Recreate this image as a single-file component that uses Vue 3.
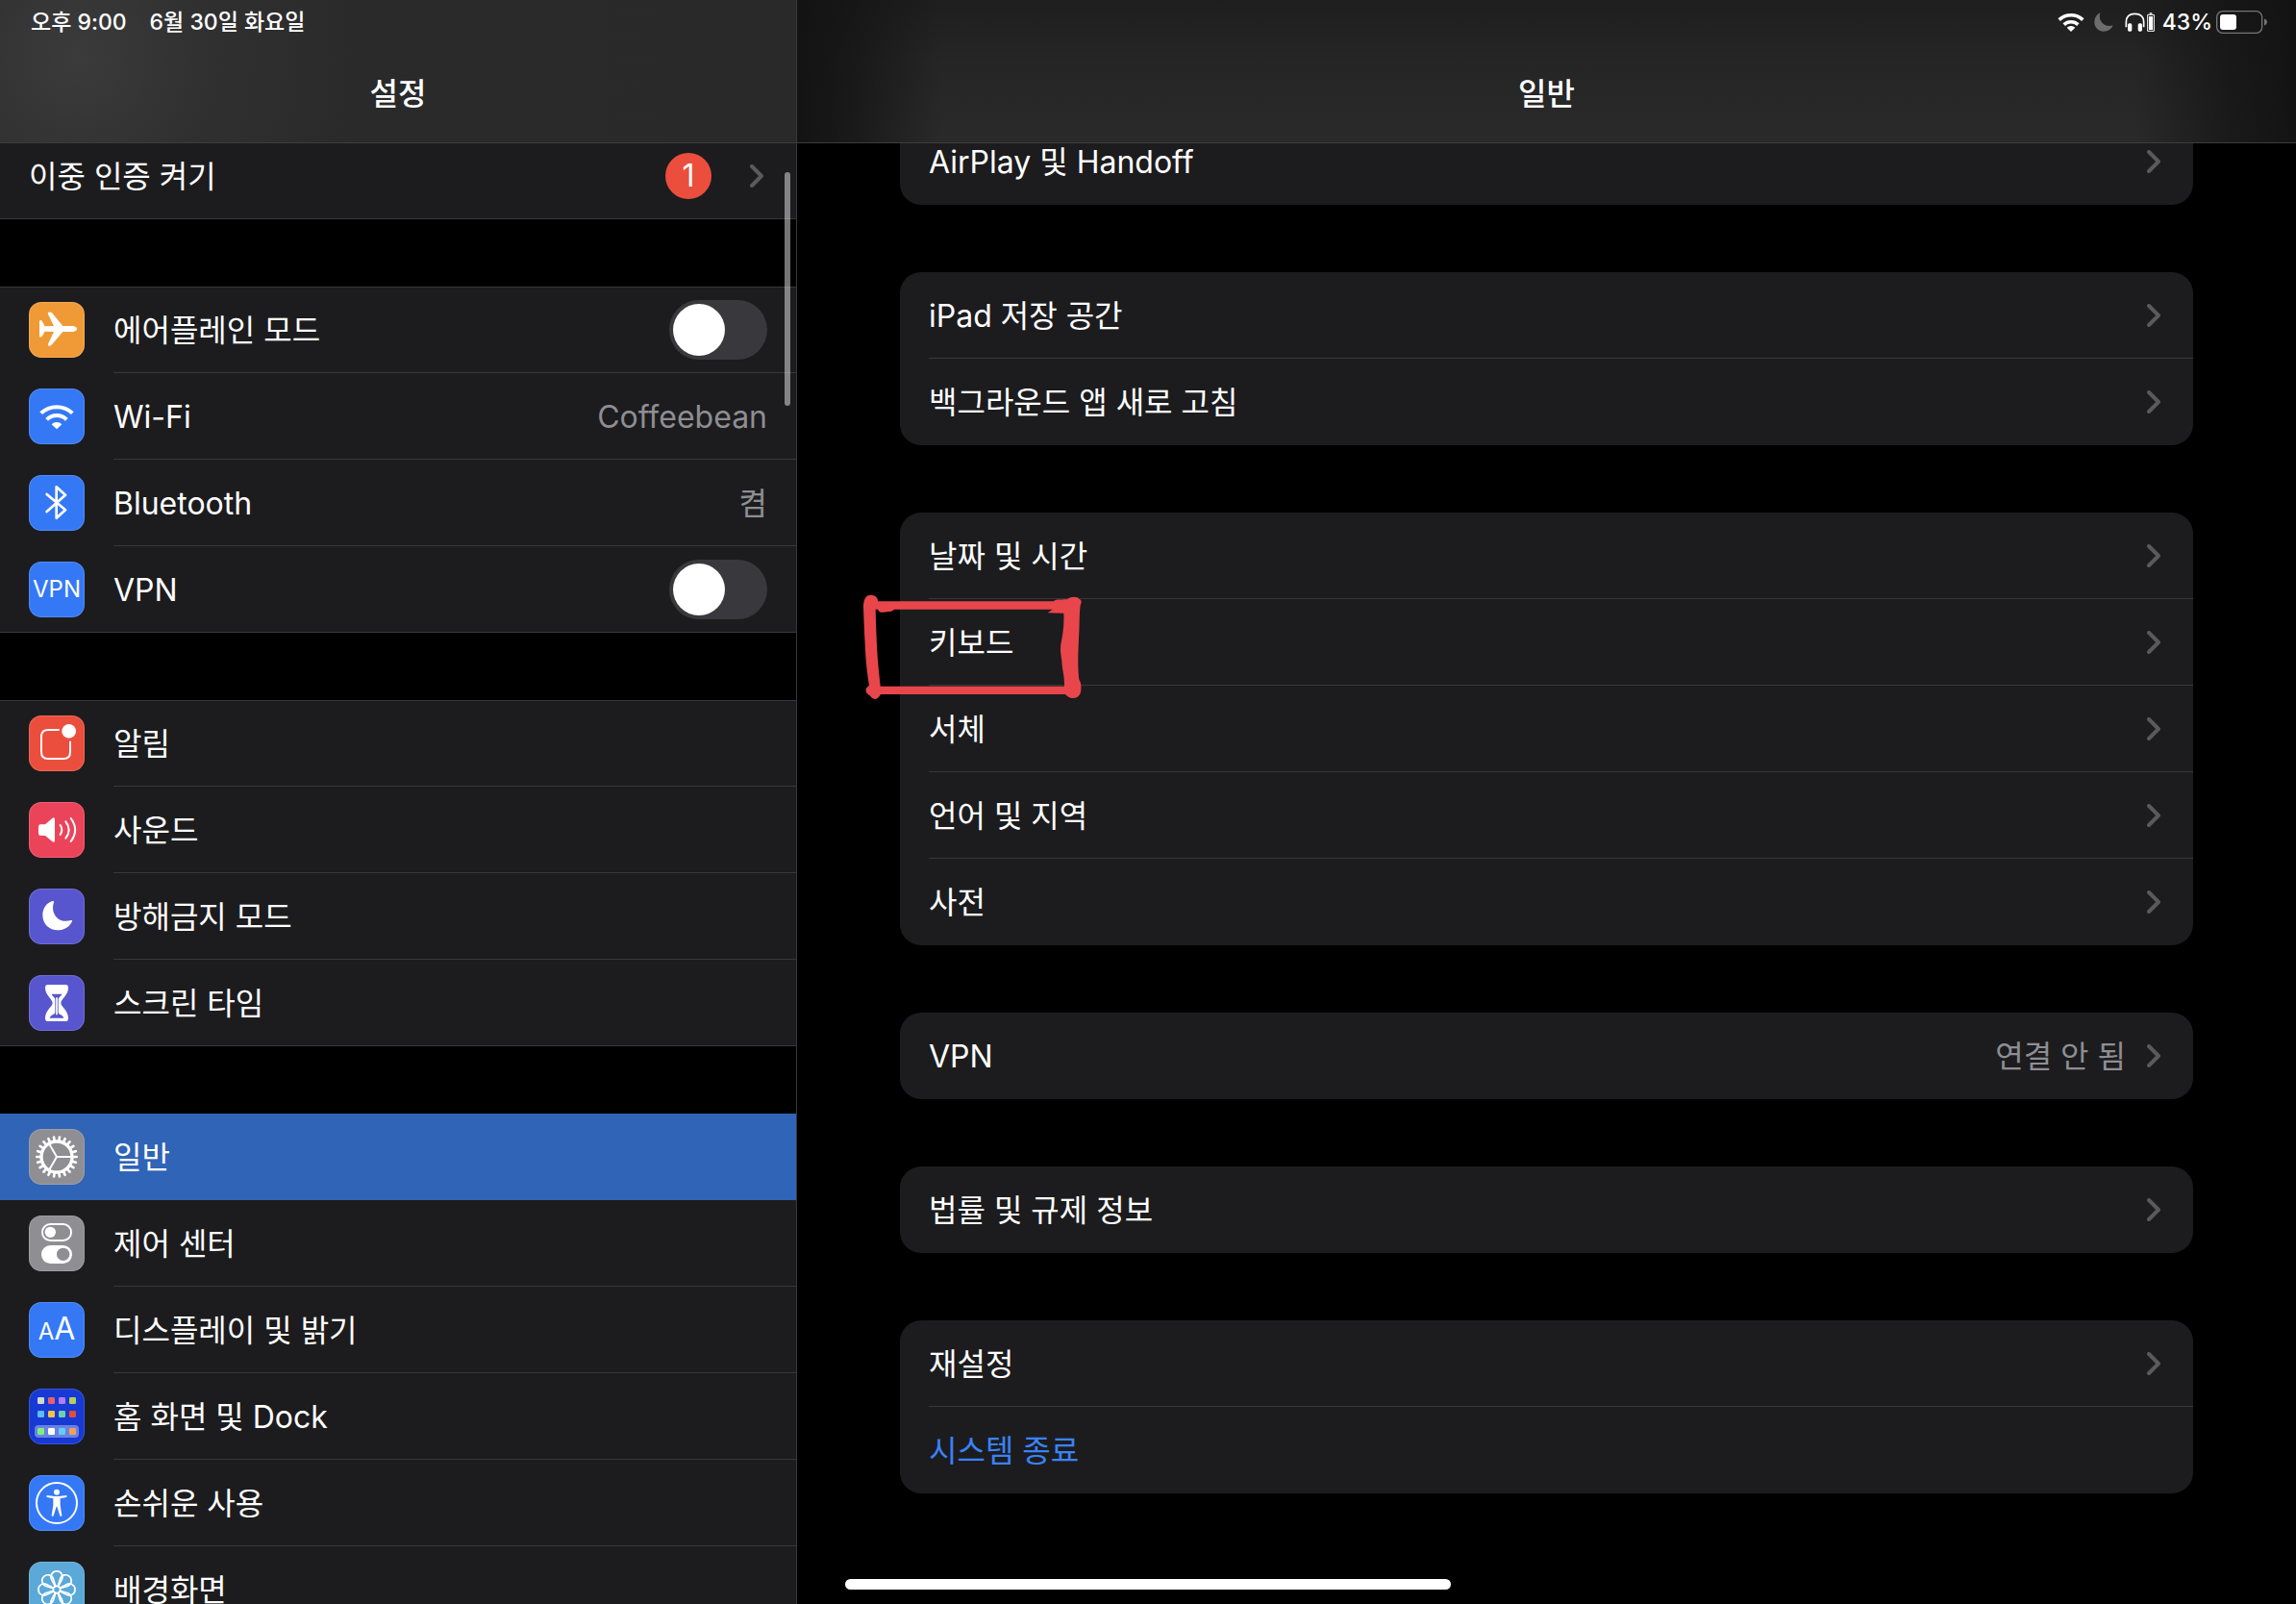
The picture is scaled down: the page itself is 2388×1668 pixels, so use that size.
<script setup>
import { ref } from "vue";

const selected = ref("general");

const sidebarGroups = ref([
  {
    id: "account",
    rows: [{ id: "twofactor", label: "이중 인증 켜기", badge: 1, chevron: true }]
  },
  {
    id: "network",
    rows: [
      { id: "airplane", label: "에어플레인 모드", color: "orange", toggle: true, on: false },
      { id: "wifi", label: "Wi-Fi", color: "blue", value: "Coffeebean" },
      { id: "bluetooth", label: "Bluetooth", color: "blue", value: "켬" },
      { id: "vpn", label: "VPN", color: "blue", toggle: true, on: false }
    ]
  },
  {
    id: "alerts",
    rows: [
      { id: "notifications", label: "알림", color: "red" },
      { id: "sound", label: "사운드", color: "pink" },
      { id: "dnd", label: "방해금지 모드", color: "purple" },
      { id: "screentime", label: "스크린 타임", color: "purple" }
    ]
  },
  {
    id: "system",
    rows: [
      { id: "general", label: "일반", color: "gray" },
      { id: "control", label: "제어 센터", color: "gray" },
      { id: "display", label: "디스플레이 및 밝기", color: "blue" },
      { id: "home", label: "홈 화면 및 Dock", color: "navy" },
      { id: "accessibility", label: "손쉬운 사용", color: "blue" },
      { id: "wallpaper", label: "배경화면", color: "sky" }
    ]
  }
]);

const generalGroups = [
  [{ label: "AirPlay 및 Handoff" }],
  [{ label: "iPad 저장 공간" }, { label: "백그라운드 앱 새로 고침" }],
  [
    { label: "날짜 및 시간" },
    { label: "키보드", marked: true },
    { label: "서체" },
    { label: "언어 및 지역" },
    { label: "사전" }
  ],
  [{ label: "VPN", value: "연결 안 됨" }],
  [{ label: "법률 및 규제 정보" }],
  [{ label: "재설정" }, { label: "시스템 종료", action: true }]
];

/* little apps on the home screen icon */
const homeApps = [
  { y: 27, colors: ["#d4d6d4", "#e95f6e", "#b07cf7", "#b4d055"] },
  { y: 69, colors: ["#5cbdf7", "#f7c244", "#6fd1a9", "#e84b39"] },
  { y: 123, colors: ["#81ee82", "#ffffff", "#64cdf8", "#f0a05e"] }
];
</script>

<template>
  <div class="settings">
    <!-- SIDEBAR -->
    <aside class="sidebar">
      <header class="header side-header">
        <div class="status">
          <span>오후 9:00</span>
          <span class="date">6월 30일 화요일</span>
        </div>
        <h1 class="title">설정</h1>
      </header>

      <nav class="scroller">
        <div class="side-list">
          <div v-for="group in sidebarGroups" :key="group.id" class="side-group">
            <component
              :is="row.toggle ? 'label' : 'a'"
              v-for="row in group.rows"
              :key="row.id"
              :href="row.toggle ? null : '#' + row.id"
              class="side-row"
              :class="{ selected: selected === row.id }"
              @click="!row.toggle && (selected = row.id)"
            >
              <span v-if="row.color" class="icon" :class="row.color">
                <span v-if="row.id === 'vpn'" class="icon-text">VPN</span>
                <span v-else-if="row.id === 'display'" class="icon-text">A<b>A</b></span>
                <svg v-else viewBox="0 0 174 174" fill="none" stroke-linecap="round" stroke-linejoin="round">
                  <path
                    v-if="row.id === 'airplane'"
                    fill="#fff"
                    d="M106 75H138C146 76 150 80 150 84C150 88 146 92 138 93H106L72 133C68 139 57 138 60 131L78 93L50 92L42 106C39 112 33 111 33 106V62C33 56 39 56 42 61L50 76L78 75L60 38C57 31 68 30 72 34Z"
                  />
                  <g v-else-if="row.id === 'wifi'" stroke="#fff" stroke-width="12" stroke-linecap="butt">
                    <path d="M38 77A71 71 0 0 1 136 77" />
                    <path d="M56 97A44 44 0 0 1 118 97" />
                    <path fill="#fff" stroke="none" d="M71 112A22 22 0 0 1 103 112L87 127Z" />
                  </g>
                  <path
                    v-else-if="row.id === 'bluetooth'"
                    stroke="#fff"
                    stroke-width="8"
                    d="M56 60L114 109L86 134V37L114 62L56 114"
                  />
                  <g v-else-if="row.id === 'notifications'">
                    <path stroke="#fff" stroke-width="6" stroke-linecap="butt" d="M95 45H60Q39 45 39 66V114Q39 135 60 135H108Q129 135 129 114V80" />
                    <circle cx="125" cy="49" r="22" fill="#fff" />
                  </g>
                  <g v-else-if="row.id === 'sound'" stroke="#fff" stroke-width="6">
                    <path fill="#fff" stroke="none" d="M30 77Q30 70 37 70H51L73 51Q81 46 81 54V120Q81 128 73 123L51 105H37Q30 105 30 98Z" />
                    <path d="M98 72Q108 87 98 102" />
                    <path d="M115 61Q135 87 115 113" />
                    <path d="M131 51Q158 87 131 123" />
                  </g>
                  <path
                    v-else-if="row.id === 'dnd'"
                    fill="#fff"
                    d="M74 39C53 45 43 64 43 83C43 110 64 130 90 130C111 130 128 119 135 102C136 99 134 98 131 99C116 104 98 102 86 89C74 76 73 58 78 43C79 40 77 38 74 39Z"
                  />
                  <g v-else-if="row.id === 'screentime'">
                    <path fill="#fff" d="M59 30H115Q123 30 123 40C123 63 100 76 100 87C100 98 123 111 123 134Q123 144 115 144H59Q51 144 51 134C51 111 74 98 74 87C74 76 51 63 51 40Q51 30 59 30Z" />
                    <path fill="#5856ce" d="M71 59H103C102 65 92 69 92 76V116C92 123 106 123 109 134H65C68 123 82 123 82 116V76C82 69 72 65 71 59Z" />
                    <path stroke="#fff" stroke-width="5" stroke-linecap="butt" d="M87 70V124" />
                  </g>
                  <g v-else-if="row.id === 'general'" stroke="#fff">
                    <circle cx="87" cy="87" r="48" stroke-width="10" />
                    <path v-for="n in 22" :key="n" stroke-width="8" d="M137 87H149" :transform="`rotate(${(n * 360) / 22} 87 87)`" />
                    <path v-for="n in 3" :key="'s' + n" stroke-width="6" d="M87 87H132" :transform="`rotate(${n * 120} 87 87)`" />
                  </g>
                  <g v-else-if="row.id === 'control'">
                    <rect x="42" y="27" width="90" height="51" rx="25" stroke="#fff" stroke-width="6" />
                    <circle cx="67" cy="52" r="17" fill="#fff" />
                    <rect x="39" y="93" width="96" height="57" rx="28" fill="#fff" />
                    <circle cx="107" cy="121" r="20" fill="#8e8e93" />
                  </g>
                  <g v-else-if="row.id === 'home'">
                    <rect x="18" y="114" width="138" height="39" rx="12" fill="#6a82e0" />
                    <template v-for="line in homeApps" :key="line.y">
                      <rect
                        v-for="(color, i) in line.colors"
                        :key="color"
                        :x="27 + i * 33"
                        :y="line.y"
                        width="21"
                        height="21"
                        rx="4"
                        :fill="color"
                      />
                    </template>
                  </g>
                  <g v-else-if="row.id === 'accessibility'">
                    <circle cx="87" cy="87" r="63" stroke="#fff" stroke-width="6" />
                    <circle cx="87" cy="53" r="9" fill="#fff" />
                    <path fill="#fff" d="M57 63L80 66H94L117 63Q122 66 117 69L98 73V94L103 125Q102 131 97 127L88 98H86L77 127Q72 131 71 125L76 94V73L57 69Q52 66 57 63Z" />
                  </g>
                  <g v-else-if="row.id === 'wallpaper'" stroke="#fff" stroke-width="5">
                    <circle cx="87" cy="87" r="11" />
                    <path v-for="n in 8" :key="n" d="M82 77L71 56A18 18 0 1 1 103 56L92 77" :transform="`rotate(${n * 45} 87 87)`" />
                  </g>
                </svg>
              </span>

              <span class="side-body">
                <span class="label">{{ row.label }}</span>
                <span v-if="row.badge" class="badge">{{ row.badge }}</span>
                <span v-if="row.value" class="value">{{ row.value }}</span>
                <input v-if="row.toggle" v-model="row.on" type="checkbox" class="switch" />
                <svg v-if="row.chevron" class="chevron" viewBox="0 0 14 24">
                  <path d="M2 2L12 12L2 22" />
                </svg>
              </span>
            </component>
          </div>
        </div>
      </nav>
      <div class="scrollbar"></div>
    </aside>

    <!-- GENERAL -->
    <main class="detail">
      <header class="header detail-header">
        <div class="status status-right">
          <svg class="s-wifi" viewBox="0 0 84 60" fill="none" stroke="#fff" stroke-width="11">
            <path d="M5 23A54 54 0 0 1 79 23" />
            <path d="M20 38A32 32 0 0 1 64 38" />
            <path fill="#fff" stroke="none" d="M29 47A19 19 0 0 1 55 47L42 60Z" />
          </svg>
          <svg class="s-moon" viewBox="0 0 60 60">
            <path fill="#6c6c6c" d="M19 1C7 6 1 18 1 30C1 47 14 59 30 59C43 59 54 52 59 40C46 44 34 41 26 33C17 24 16 12 19 1Z" />
          </svg>
          <svg class="s-phones" viewBox="0 0 63 60">
            <path fill="none" stroke="#fff" stroke-width="5" d="M4 46V30C4 12 15 4 31 4C47 4 59 12 59 30V46" />
            <rect x="9" y="34" width="13" height="25" rx="5" fill="#fff" />
            <rect x="41" y="34" width="13" height="25" rx="5" fill="#fff" />
          </svg>
          <svg class="s-cell" viewBox="0 0 24 60">
            <path fill="none" stroke="#fff" stroke-width="3" d="M2 7H22V58H2Z" />
            <path fill="#fff" d="M8 1H16V5H8ZM6 12H18V54H6Z" />
          </svg>
          <span class="percent">43%</span>
          <svg class="s-battery" viewBox="0 0 159 72">
            <rect x="2" y="2" width="141" height="68" rx="18" fill="none" stroke="#757575" stroke-width="4" />
            <rect x="12" y="12" width="51" height="48" rx="9" fill="#fff" />
            <path fill="#757575" d="M150 25Q159 29 159 36Q159 43 150 47Z" />
          </svg>
        </div>
        <h1 class="title">일반</h1>
      </header>

      <div class="scroller">
        <div class="detail-list">
          <section v-for="(group, g) in generalGroups" :key="g" class="card">
            <a v-for="row in group" :key="row.label" href="#" class="card-row" :class="{ action: row.action }">
              <span class="label">{{ row.label }}</span>
              <span v-if="row.value" class="value">{{ row.value }}</span>
              <svg v-if="!row.action" class="chevron" viewBox="0 0 14 24">
                <path d="M2 2L12 12L2 22" />
              </svg>
              <!-- hand drawn marker -->
              <svg v-if="row.marked" class="marker" viewBox="0 0 840 420">
                <path
                  d="M54 92C54 70 62 56 77 56C91 57 100 64 99 76H648C653 70 660 71 690 70C698 60 722 59 728 69C736 73 735 80 731 88C727 120 729 150 726 190C724 240 722 280 727 320C733 329 734 340 733 352C732 371 720 379 708 378C696 378 690 372 684 366H108C102 377 96 381 90 381C82 380 78 376 74 370C64 365 61 358 62 350C64 345 68 341 72 339C66 300 61 260 59 210C57 170 55 130 54 92ZM92 101C93 150 95 190 97 230C99 270 104 310 107 341H681C682 310 674 290 673 262C670 240 667 225 671 205C676 180 681 150 679 113L629 112L644 101H150C146 106 140 108 132 108C122 110 114 111 108 110C102 107 100 104 99 101Z"
                />
              </svg>
            </a>
          </section>
        </div>
      </div>
    </main>

    <div class="home-indicator"></div>
  </div>
</template>

<style>
body {
  background: #000;
}
</style>

<style scoped>
.settings {
  position: relative;
  display: flex;
  height: 100vh;
  overflow: hidden;
  background: #000;
  color: #fff;
  font-family: Inter, "Noto Sans CJK KR", sans-serif;
  font-size: 32px;
  line-height: 40px;
}

.sidebar {
  position: relative;
  display: flex;
  flex-direction: column;
  flex: 0 0 829px;
  box-sizing: border-box;
  border-right: 1px solid #38383a;
}

.detail {
  display: flex;
  flex-direction: column;
  flex: 1;
  min-width: 0;
}

/* HEADERS */
.header {
  flex-shrink: 0;
  border-bottom: 1px solid #3d3d3f;
}

.side-header {
  background: radial-gradient(circle at 80px 60px, #3b3b3c 0, #303031 140px, #2a2a2b 300px, #29292a 100%);
}

.detail-header {
  background:
    linear-gradient(90deg, #131313 0, #131313b0 60px, transparent 150px, transparent calc(100% - 170px), #131313b0 calc(100% - 70px), #131313 100%),
    linear-gradient(#1e1e1f 0, #252526 60px, #2a2a2b 148px);
}

.status {
  display: flex;
  align-items: center;
  height: 46px;
  padding: 0 30px 0 32px;
  font-size: 23px;
  font-weight: 500;
}

.date {
  margin-left: 24px;
}

.status-right {
  justify-content: flex-end;
}

.s-wifi {
  width: 28px;
  height: 20px;
}

.s-moon {
  width: 20px;
  height: 20px;
  margin-left: 10px;
}

.s-phones {
  width: 21px;
  height: 20px;
  margin-left: 12px;
}

.s-cell {
  width: 8px;
  height: 20px;
  margin-left: 2px;
}

.percent {
  margin: 0 4px 0 8px;
}

.s-battery {
  width: 53px;
  height: 24px;
}

.title {
  margin: 0;
  padding-top: 2px;
  font-size: 32px;
  font-weight: 500;
  line-height: 100px;
  text-align: center;
}

/* LISTS */
.scroller {
  flex: 1;
  min-height: 0;
  overflow-y: auto;
  scrollbar-width: none;
}

.side-list {
  display: flex;
  flex-direction: column;
  gap: 70px;
  margin-top: -11px;
}

.side-group {
  background: #1c1c1e;
}

.side-row {
  display: flex;
  align-items: center;
  height: 90px;
  padding-left: 30px;
  box-sizing: border-box;
  color: #fff;
  text-decoration: none;
}

.side-row:first-child {
  box-shadow: inset 0 1px #38383a;
}

.side-body {
  display: flex;
  align-items: center;
  flex: 1;
  align-self: stretch;
  padding-right: 30px;
  border-bottom: 1px solid #38383a;
}

.side-row:last-child {
  border-bottom: 1px solid #38383a;
}

.side-row:last-child .side-body {
  border-bottom: 0;
}

.side-row.selected {
  background: #2f64b7;
  box-shadow: none;
}

.side-row.selected .side-body {
  border-color: transparent;
}

.label {
  flex: 1;
  padding-top: 2px;
}

.value {
  padding-top: 2px;
  color: #8e8e93;
}

.badge {
  width: 48px;
  height: 48px;
  margin-right: 40px;
  border-radius: 50%;
  background: #eb4e3d;
  line-height: 48px;
  text-align: center;
}

.chevron {
  width: 14px;
  height: 24px;
  margin-right: 4px;
  fill: none;
  stroke: #5a5a5e;
  stroke-width: 4;
  stroke-linecap: round;
  stroke-linejoin: round;
}

.switch {
  appearance: none;
  display: flex;
  width: 102px;
  height: 62px;
  margin: 0;
  padding: 4px;
  box-sizing: border-box;
  border-radius: 31px;
  background: #39393d;
  cursor: pointer;
}

.switch::before {
  content: "";
  width: 54px;
  height: 54px;
  border-radius: 50%;
  background: #fff;
}

.switch:checked {
  justify-content: flex-end;
  background: #30d158;
}

.scrollbar {
  position: absolute;
  top: 179px;
  right: 6px;
  width: 6px;
  height: 243px;
  border-radius: 3px;
  background: rgba(255, 255, 255, 0.46);
}

/* ICONS */
.icon {
  display: flex;
  align-items: center;
  justify-content: center;
  width: 58px;
  height: 58px;
  margin-right: 30px;
  border-radius: 13px;
  box-shadow: inset 0 0 0 1px rgba(255, 255, 255, 0.15);
}

.icon svg {
  width: 58px;
  height: 58px;
}

.icon-text {
  font-size: 24px;
}

.icon-text b {
  font-size: 32px;
  font-weight: 400;
}

.orange {
  background: #f09a37;
}

.blue {
  background: #3478f6;
}

.red {
  background: #eb4e3d;
}

.pink {
  background: #eb445a;
}

.purple {
  background: #5856ce;
}

.gray {
  background: #8e8e93;
}

.navy {
  background: #1739d4;
}

.sky {
  background: #5ba9d8;
}

/* CARDS */
.detail-list {
  display: flex;
  flex-direction: column;
  gap: 70px;
  margin-top: -26px;
  padding: 0 107px;
}

.card {
  border-radius: 22px;
  background: #1c1c1e;
}

.card-row {
  position: relative;
  display: flex;
  align-items: center;
  height: 90px;
  margin-left: 30px;
  padding-right: 30px;
  box-sizing: border-box;
  border-bottom: 1px solid #38383a;
  color: #fff;
  text-decoration: none;
}

.card-row:last-child {
  border-bottom: 0;
}

.card-row .value {
  margin-right: 22px;
}

.card-row.action {
  color: #3b82f7;
}

.marker {
  position: absolute;
  top: -23px;
  left: -86px;
  width: 280px;
  height: 140px;
  fill: #e9464b;
  fill-rule: evenodd;
  pointer-events: none;
}

.home-indicator {
  position: absolute;
  bottom: 15px;
  left: 50%;
  width: 630px;
  height: 11px;
  border-radius: 6px;
  background: #fff;
  transform: translateX(-50%);
}
</style>
